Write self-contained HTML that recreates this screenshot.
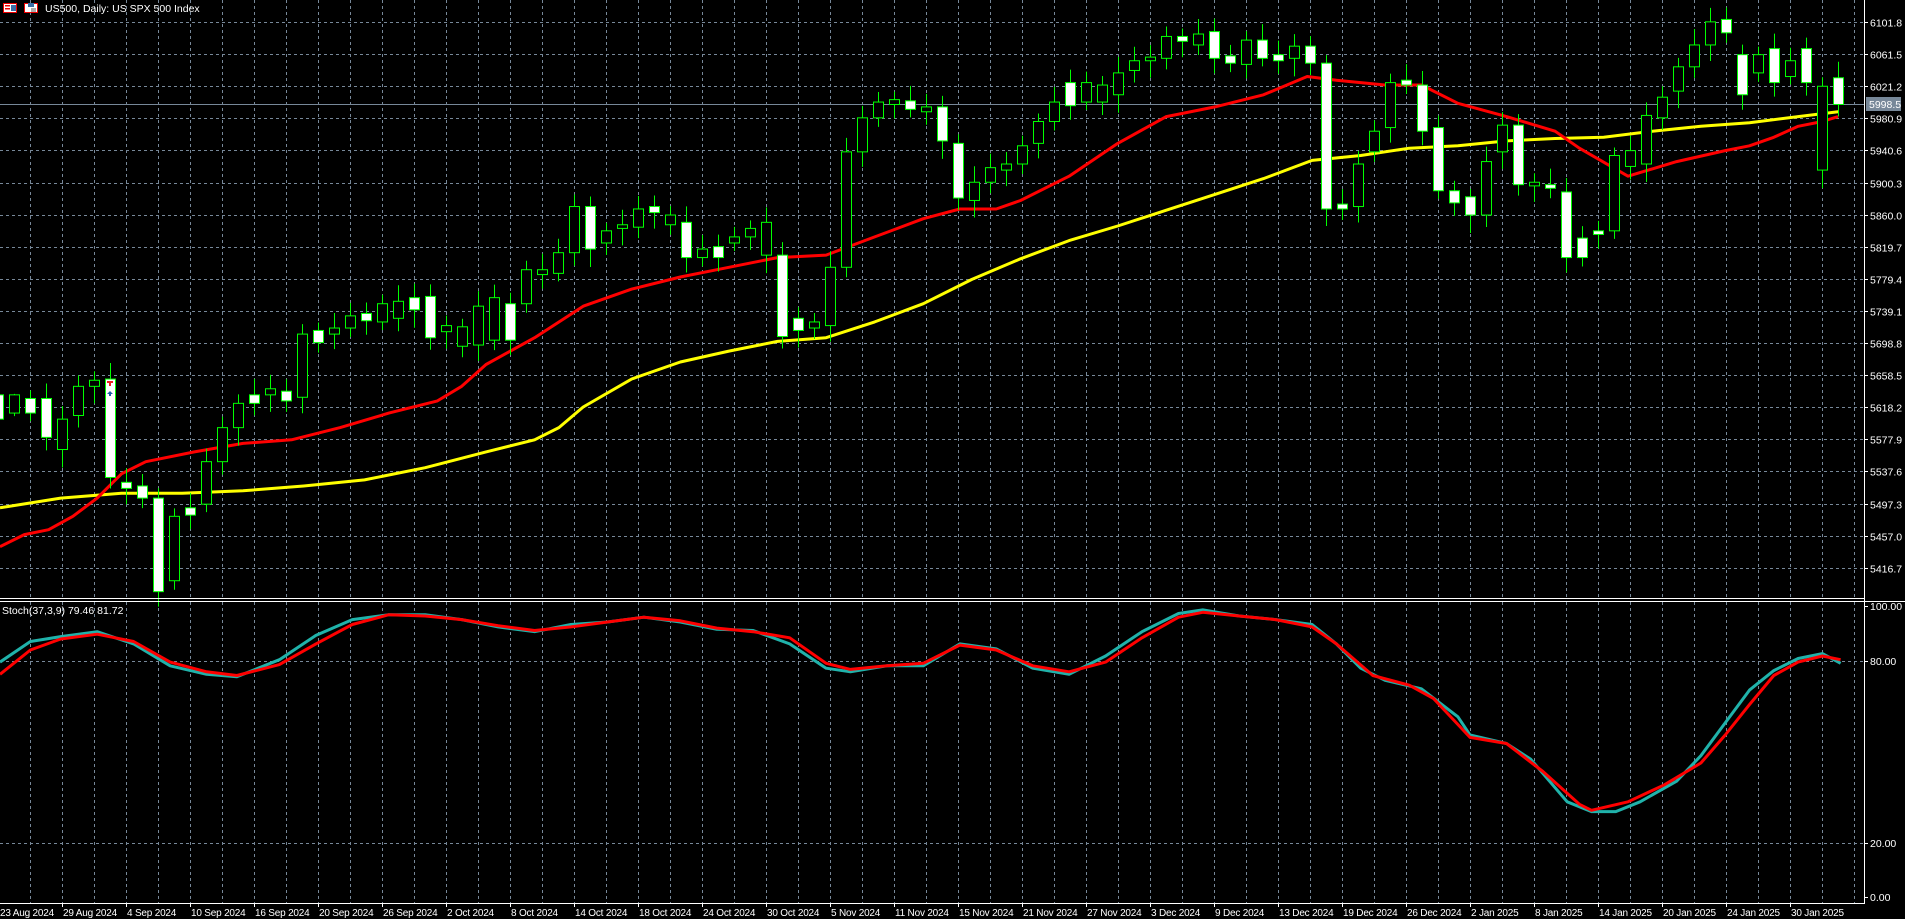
<!DOCTYPE html>
<html><head><meta charset="utf-8">
<style>
html,body{margin:0;padding:0;background:#000;width:1905px;height:919px;overflow:hidden}
svg{display:block}
text{font-family:"Liberation Sans",sans-serif;font-size:10.5px;fill:#fff}
.d{font-size:10px;letter-spacing:-0.2px}
</style></head><body>
<svg id="c" width="1905" height="919" xmlns="http://www.w3.org/2000/svg">
<rect width="1905" height="919" fill="#000"/>
<g id="grid"></g>
<line x1="0" y1="104.5" x2="1864" y2="104.5" stroke="#778899" stroke-width="1"/>
<g id="ma"></g>
<g id="cand"></g>
<g id="stoch"></g>
<line x1="0" y1="598.5" x2="1864" y2="598.5" stroke="#fff"/>
<line x1="0" y1="601.5" x2="1905" y2="601.5" stroke="#fff"/>
<line x1="1864.5" y1="0" x2="1864.5" y2="903" stroke="#fff"/>
<line x1="0" y1="903.5" x2="1865" y2="903.5" stroke="#fff"/>
<g id="axis"></g>
<rect x="1866" y="97" width="35" height="14" fill="#778899"/>
<text x="1869" y="108" style="fill:#fff">5998.5</text>
<rect x="3.5" y="3.5" width="13" height="9" fill="#fff" stroke="#e00"/>
<rect x="5" y="5" width="5" height="1.5" fill="#e00"/><rect x="5" y="8" width="5" height="1.5" fill="#e00"/><rect x="11" y="5" width="5" height="6" fill="#3a6ea5"/>
<rect x="24.5" y="3.5" width="13" height="9" fill="#fff" stroke="#e00"/>
<rect x="28" y="3" width="6" height="4" fill="#3a6ea5"/><rect x="31" y="8" width="5" height="4" fill="#aaa"/>
<text x="45" y="12">US500, Daily:  US SPX 500 Index</text>
<text x="2" y="614">Stoch(37,3,9) 79.46 81.72</text>
<path d="M107 381h6v2h-2v3h-2v-3h-2z" fill="#e22"/>
<path d="M110 391l3 3h-2v2h-2v-2h-2z" fill="#1e5fa8"/>
</svg>
<script>
var S=1.2149,NS="http://www.w3.org/2000/svg";
function el(p,t,a){var e=document.createElementNS(NS,t);for(var k in a)e.setAttribute(k,a[k]);document.getElementById(p).appendChild(e);return e;}
for(var k=0;k<58;k++){var x=30+32*k+0.5;el('grid','line',{x1:x,y1:0,x2:x,y2:598,stroke:'#778899','stroke-dasharray':'3,3'});el('grid','line',{x1:x,y1:602,x2:x,y2:903,stroke:'#778899','stroke-dasharray':'3,3'});}
var labels=["6101.8","6061.5","6021.2","5980.9","5940.6","5900.3","5860.0","5819.7","5779.4","5739.1","5698.8","5658.5","5618.2","5577.9","5537.6","5497.3","5457.0","5416.7"];
for(var i=0;i<labels.length;i++){var y=Math.round(22+i*32.1)+0.5;el('grid','line',{x1:0,y1:y,x2:1864,y2:y,stroke:'#778899','stroke-dasharray':'3,3'});el('axis','line',{x1:1864,y1:y,x2:1868,y2:y,stroke:'#fff'});var t=el('axis','text',{x:1870,y:y+4});t.textContent=labels[i];}
[[661,"80.00"],[843,"20.00"]].forEach(function(a){el('grid','line',{x1:0,y1:a[0]+.5,x2:1864,y2:a[0]+.5,stroke:'#778899','stroke-dasharray':'3,3'});});
[[606,"100.00"],[661,"80.00"],[843,"20.00"],[897,"0.00"]].forEach(function(a){el('axis','line',{x1:1864,y1:a[0]+.5,x2:1868,y2:a[0]+.5,stroke:'#fff'});var t=el('axis','text',{x:1870,y:a[0]+4});t.textContent=a[1];});
var dates=["29 Aug 2024","4 Sep 2024","10 Sep 2024","16 Sep 2024","20 Sep 2024","26 Sep 2024","2 Oct 2024","8 Oct 2024","14 Oct 2024","18 Oct 2024","24 Oct 2024","30 Oct 2024","5 Nov 2024","11 Nov 2024","15 Nov 2024","21 Nov 2024","27 Nov 2024","3 Dec 2024","9 Dec 2024","13 Dec 2024","19 Dec 2024","26 Dec 2024","2 Jan 2025","8 Jan 2025","14 Jan 2025","20 Jan 2025","24 Jan 2025","30 Jan 2025"];
var t0=el('axis','text',{x:0,y:916,'class':'d'});t0.textContent="23 Aug 2024";
for(var i=0;i<dates.length;i++){var x=62+64*i;el('axis','line',{x1:x+.5,y1:903,x2:x+.5,y2:907,stroke:'#fff'});var t=el('axis','text',{x:x+1,y:916,'class':'d'});t.textContent=dates[i];}
var C=[[-2,325,345,1],[-1,325,340,0],[0,328,340,1],[1,328,360,1],[2,345,370,0],[3,318,342,0],[4,313,318,0],[5,312,393,1],[6,397,402,1],[7,400,410,1],[8,410,487,1],[9,425,478,0],[10,418,424,1],[11,380,415,0],[12,352,380,0],[13,332,352,0],[14,325,332,1],[15,320,325,0],[16,322,330,1],[17,275,327,0],[18,272,282,1],[19,270,275,0],[20,260,270,0],[21,258,264,1],[22,250,265,0],[23,248,262,0],[24,245,255,1],[25,244,278,1],[26,268,273,0],[27,269,285,0],[28,252,284,0],[29,245,280,0],[30,250,280,1],[31,222,250,0],[32,222,226,0],[33,208,225,0],[34,170,208,0],[35,170,205,1],[36,190,200,0],[37,185,188,0],[38,172,187,0],[39,170,175,1],[40,177,185,0],[41,183,212,1],[42,205,212,0],[43,203,212,1],[44,195,200,0],[45,188,195,0],[46,183,210,0],[47,210,277,1],[48,262,272,1],[49,265,270,0],[50,220,268,0],[51,125,220,0],[52,97,125,0],[53,84,97,0],[54,82,86,0],[55,83,90,1],[56,88,92,0],[57,88,116,1],[58,118,163,1],[59,150,165,0],[60,138,150,0],[61,135,140,0],[62,120,135,0],[63,100,118,0],[64,84,100,0],[65,68,87,1],[66,68,84,0],[67,70,84,0],[68,60,78,0],[69,50,58,0],[70,47,50,0],[71,30,48,0],[72,30,34,1],[73,28,37,0],[74,26,48,1],[75,46,52,1],[76,33,53,0],[77,33,48,1],[78,45,50,1],[79,38,48,0],[80,38,52,1],[81,52,172,1],[82,168,172,1],[83,135,170,0],[84,108,125,0],[85,68,105,0],[86,66,70,1],[87,70,108,1],[88,105,157,1],[89,157,167,1],[90,162,177,1],[91,133,177,0],[92,103,125,0],[93,103,152,1],[94,150,153,0],[95,152,155,1],[96,158,212,1],[97,196,212,1],[98,190,193,1],[99,128,190,0],[100,124,137,0],[101,95,135,0],[102,80,97,0],[103,55,75,0],[104,37,55,0],[105,18,37,0],[106,16,27,1],[107,45,78,1],[108,45,60,0],[109,40,68,1],[110,50,63,0],[111,40,68,1],[112,71,140,0],[113,64,86,1]];
C.forEach(function(c){var x=30+16*c[0],t=c[1]*S,b=c[2]*S;var wt=t-8-((c[0]*7)%9),wb=b+8+((c[0]*5)%11);
el('cand','line',{x1:x+.5,y1:wt,x2:x+.5,y2:wb,stroke:'#00ff00'});
el('cand','rect',{x:x-4.5,y:t,width:10,height:Math.max(2,b-t),fill:c[3]?'#fff':'#000',stroke:'#00ff00'});});
function pl(g,pts,col,w){el(g,'polyline',{points:pts.map(function(p){return (p[0]*S).toFixed(1)+','+(p[1]*S).toFixed(1)}).join(' '),fill:'none',stroke:col,'stroke-width':w,'stroke-linejoin':'round'});}
pl('ma',[[0,418],[50,410],[100,406],[150,406],[200,404],[250,400],[300,395],[350,385],[400,372],[440,362],[460,352],[480,335],[520,312],[560,298],[600,289],[640,281],[680,278],[720,265],[760,250],[800,230],[840,213],[880,198],[920,186],[960,173],[1000,160],[1040,147],[1080,132],[1120,128],[1160,122],[1200,120],[1240,116],[1280,114],[1320,113],[1360,108],[1400,104],[1440,101],[1480,96],[1513,92]],'#ffff00',3);
pl('ma',[[0,450],[20,440],[40,436],[60,425],[80,410],[100,390],[120,380],[160,372],[200,365],[240,362],[280,352],[320,340],[360,330],[380,318],[400,300],[440,278],[480,252],[520,238],[560,228],[600,220],[640,212],[680,210],[720,195],[760,180],[790,172],[820,172],[840,165],[880,145],[920,118],[960,96],[1000,88],[1040,78],[1076,63],[1100,66],[1140,70],[1170,70],[1200,85],[1240,96],[1280,108],[1300,122],[1340,145],[1380,133],[1420,124],[1440,120],[1460,113],[1480,104],[1500,100],[1513,96]],'#ff0000',3);
pl('stoch',[[0,545],[25,528],[50,524],[80,520],[110,530],[140,548],[170,555],[195,557],[230,543],[260,523],[290,510],[320,506],[350,506],[380,510],[410,516],[440,520],[470,514],[500,512],[530,508],[560,512],[590,518],[620,519],[650,530],[680,550],[700,553],[730,548],[760,548],[790,530],[820,534],[850,550],[880,555],[910,540],[940,520],[970,505],[990,502],[1020,507],[1050,510],[1080,514],[1100,530],[1120,550],[1140,560],[1170,567],[1200,590],[1210,605],[1240,612],[1260,625],[1290,660],[1310,668],[1330,668],[1350,660],[1380,643],[1400,622],[1420,595],[1440,568],[1460,552],[1480,542],[1500,538],[1515,546]],'#20b2aa',3);
pl('stoch',[[0,555],[25,535],[50,526],[80,522],[110,528],[140,545],[170,553],[195,556],[230,547],[260,530],[290,514],[320,506],[350,507],[380,510],[410,515],[440,519],[470,516],[500,512],[530,508],[560,511],[590,517],[620,520],[650,525],[680,546],[700,551],[730,548],[760,546],[790,531],[820,535],[850,548],[880,553],[910,545],[940,525],[970,508],[990,504],[1020,507],[1050,510],[1080,516],[1100,530],[1130,556],[1160,564],[1180,575],[1210,607],[1240,612],[1270,635],[1300,662],[1310,667],[1340,660],[1370,646],[1400,628],[1420,605],[1440,580],[1460,556],[1480,545],[1500,540],[1515,543]],'#ff0000',3);
</script>
</body></html>
